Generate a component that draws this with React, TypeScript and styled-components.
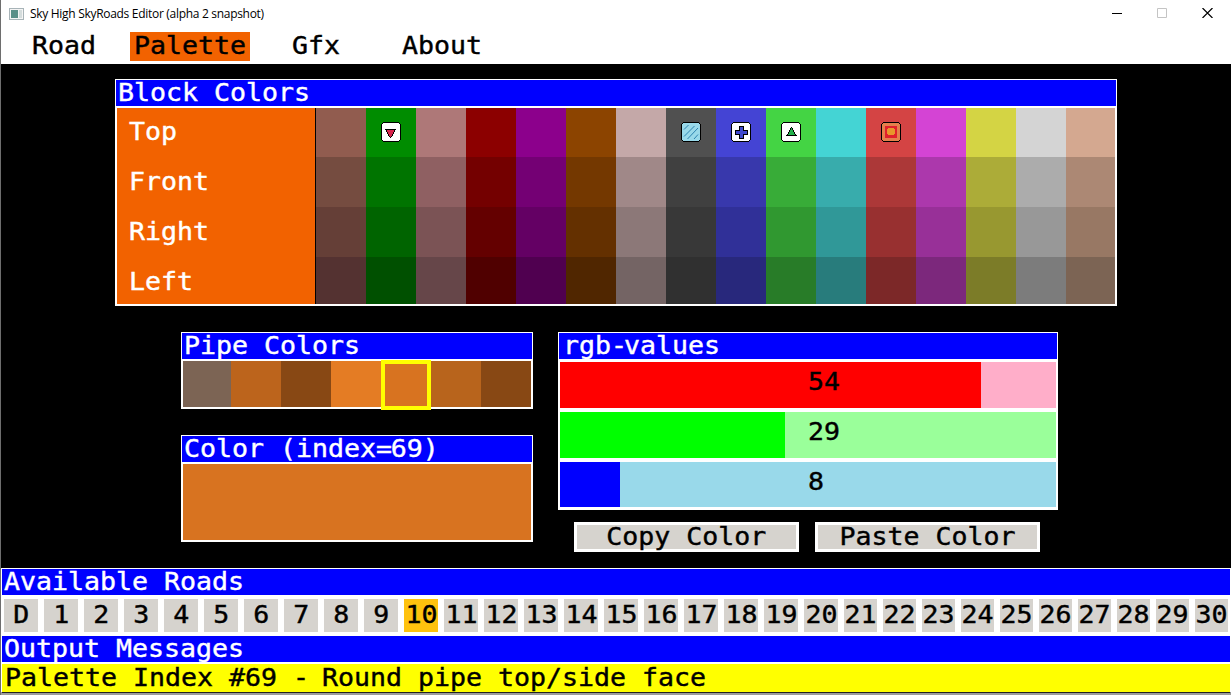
import React from "react";
import styled, { createGlobalStyle, css } from "styled-components";

const Global = createGlobalStyle`
  * { box-sizing: border-box; }
  body { margin: 0; background: #000; overflow: hidden; }
`;

const Window = styled.div`
  width: 1231px;
  height: 695px;
  display: flex;
  flex-direction: column;
  background: #000;
  border-left: 1px solid #6e6e6e;
  font-family: "DejaVu Sans Mono", monospace;
  font-size: 24px;
  line-height: 26px;
  color: #fff;
  overflow: hidden;
`;

const Label = styled.span<{ $center?: boolean }>`
  display: inline-block;
  white-space: pre;
  transform: scaleX(1.1073);
  transform-origin: ${(p) => (p.$center ? "center" : "left")};
  -webkit-text-stroke: 0.4px currentColor;
`;

const Tight = styled.span<{ $by?: number }>`
  letter-spacing: -${(p) => p.$by ?? 2.8}px;
`;

const TitleBar = styled.header`
  height: 28px;
  flex: none;
  display: flex;
  align-items: center;
  padding: 0 18px 0 8px;
  background: #fff;
  color: #000;
`;

const Title = styled.span`
  flex: 1;
  margin-left: 6px;
  font: 12px/26px "Open Sans", "Noto Sans", sans-serif;
  letter-spacing: -0.3px;
  white-space: nowrap;
`;

const Controls = styled.div`
  display: flex;
  gap: 35px;
  padding-bottom: 2px;
`;

const Menu = styled.nav`
  height: 36px;
  flex: none;
  display: flex;
  align-items: flex-start;
  padding: 4px 0 0 27px;
  background: #fff;
  color: #000;
`;

const MenuItem = styled.div<{ $w: number; $gap?: number; $active?: boolean }>`
  width: ${(p) => p.$w}px;
  height: 29px;
  margin-right: ${(p) => p.$gap ?? 0}px;
  padding-left: 4px;
  line-height: 29px;
  background: ${(p) => (p.$active ? "#f26200" : "transparent")};
`;

const Workspace = styled.main`
  height: 504px;
  flex: none;
  display: flex;
  flex-direction: column;
  padding: 15px 0 0 114px;
`;

const PanelTitle = styled.div<{ $indent?: number }>`
  height: 27px;
  flex: none;
  padding-left: ${(p) => p.$indent ?? 2}px;
  border: 1px solid #fff;
  border-bottom: 0;
  background: #00f;
  line-height: 26px;
`;

const PanelBody = styled.div`
  border: 2px solid #fff;
  display: flex;
  overflow: hidden;
`;

const BlockPanel = styled.section`
  width: 1002px;
`;

const BlockBody = styled(PanelBody)`
  height: 200px;
`;

const FaceNames = styled.div`
  width: 199px;
  flex: none;
  background: #f26200;
  border-right: 1px solid #000;
`;

const FaceName = styled.div`
  height: 50px;
  padding-left: 12px;
  line-height: 48px;
`;

const Column = styled.div`
  width: 50px;
  flex: none;
`;

const Cell = styled.div<{ $color: string; $first?: boolean }>`
  height: ${(p) => (p.$first ? 49 : 50)}px;
  display: flex;
  align-items: flex-start;
  justify-content: center;
  padding-top: 14px;
  background: ${(p) => p.$color};
`;

const LowerArea = styled.div`
  display: flex;
  gap: 25px;
  margin: 26px 0 0 66px;
`;

const LeftStack = styled.div`
  width: 352px;
  display: flex;
  flex-direction: column;
  gap: 26px;
`;

const Frame = styled.section`
  width: 100%;
`;

const PipeBody = styled(PanelBody)`
  height: 50px;
  overflow: visible;
`;

const PipeCell = styled.div<{ $color: string; $first?: boolean; $selected?: boolean }>`
  width: ${(p) => (p.$first ? 48 : 50)}px;
  height: 46px;
  flex: none;
  background: ${(p) => p.$color};
  ${(p) =>
    p.$selected &&
    css`
      height: 50px;
      margin-top: -1px;
      border: 4px solid #ff0;
      z-index: 1;
    `}
`;

const Swatch = styled(PanelBody)`
  height: 80px;
  background: #d87320;
`;

const RightStack = styled.div`
  width: 500px;
`;

const Sliders = styled.div`
  height: 151px;
  padding: 3px 2px;
  display: flex;
  flex-direction: column;
  gap: 4px;
  background: #fff;
`;

const Slider = styled.div<{ $track: string; $fill: string; $width: number }>`
  height: 46px;
  padding-left: 248px;
  line-height: 40px;
  color: #000;
  background: linear-gradient(
    to right,
    ${(p) => p.$fill} ${(p) => p.$width}px,
    ${(p) => p.$track} ${(p) => p.$width}px
  );
  &:last-child {
    height: 45px;
  }
`;

const Actions = styled.div`
  display: flex;
  gap: 16px;
  margin: 12px 0 0 16px;
`;

const Button = styled.button`
  width: 225px;
  height: 30px;
  padding: 0 1px 0 0;
  border: 3px solid #fff;
  background: #d6d3ce;
  color: #000;
  font: inherit;
  line-height: 24px;
  text-align: center;
`;

const RoadStrip = styled.div`
  height: 40px;
  flex: none;
  display: flex;
  gap: 6px;
  padding: 4px 0 3px 3px;
  background: #fff;
`;

const Road = styled.div<{ $active?: boolean; $narrow?: boolean }>`
  width: ${(p) => (p.$narrow ? 33 : 34)}px;
  height: 33px;
  flex: none;
  display: flex;
  justify-content: center;
  background: ${(p) => (p.$active ? "#ffc20e" : "#d6d3ce")};
  color: #000;
  line-height: 33px;
`;

const Message = styled.div`
  height: 31px;
  flex: none;
  padding-left: 3px;
  border: 1px solid #fff;
  border-top-width: 2px;
  border-bottom: 1px solid #222;
  background: #ff0;
  color: #000;
  line-height: 28px;
`;

const Footer = styled.div`
  flex: 1;
  background: #9c9c9c;
`;

const blockColors: string[][] = [
  ["#915c4f", "#754c40", "#653f37", "#543231"],
  ["#008c00", "#007400", "#006400", "#005000"],
  ["#ae7878", "#8f6062", "#7b5355", "#664649"],
  ["#8c0000", "#740000", "#640000", "#500000"],
  ["#8c008c", "#740074", "#640064", "#500050"],
  ["#8c4400", "#743800", "#643000", "#502600"],
  ["#c4a8a8", "#a08888", "#8c7878", "#746464"],
  ["#505050", "#404040", "#383838", "#303030"],
  ["#4444d4", "#3838ac", "#303098", "#28287c"],
  ["#44d444", "#38ac38", "#309830", "#287c28"],
  ["#44d4d4", "#38acac", "#309898", "#287c7c"],
  ["#d44444", "#ac3838", "#983030", "#7c2828"],
  ["#d444d4", "#ac38ac", "#983098", "#7c287c"],
  ["#d4d444", "#acac38", "#989830", "#7c7c28"],
  ["#d4d4d4", "#acacac", "#989898", "#7c7c7c"],
  ["#d4a890", "#ac8874", "#987864", "#7c6454"],
];

const pipeColors = ["#7c6454", "#bc641c", "#884814", "#e47c24", "#d87320", "#b8641c", "#884814"];

const Tile = ({ fill, children }: { fill: string; children: React.ReactNode }) => (
  <svg width="20" height="20" viewBox="0 0 20 20" shapeRendering="crispEdges">
    <path d="M2 0h16v1h1v1h1v16h-1v1h-1v1H2v-1H1v-1H0V2h1V1h1z" fill="#000" />
    <path d="M2 1h16v1h1v16h-1v1H2v-1H1V2h1z" fill={fill} />
    {children}
  </svg>
);

const markers: Record<number, React.ReactNode> = {
  1: (
    <Tile fill="#fff">
      <path d="M4 7h11v1h-1v2h-1v2h-1v2h-1v1h-1v1H9v-1H8v-1H7v-2H6v-2H5V8H4z" fill="#000" />
      <path d="M6 8h7v2h-1v2h-1v2h-1v1H9v-1H8v-2H7v-2H6z" fill="#d8244c" />
    </Tile>
  ),
  7: (
    <Tile fill="#99d9ea">
      <path
        d="M3 7.5L7.5 3M3 14.5L13.5 4M6.5 17L17 6M13 17l4-4.5"
        stroke="#2078a8"
        strokeWidth="0.9"
        fill="none"
        shapeRendering="geometricPrecision"
      />
    </Tile>
  ),
  8: (
    <Tile fill="#fff">
      <path d="M8 4h5v4h4v5h-4v4H8v-4H4V8h4z" fill="#000" />
      <path d="M9 5h3v4h4v3h-4v4H9v-4H5V9h4z" fill="#3f48cc" />
    </Tile>
  ),
  9: (
    <Tile fill="#fff">
      <path d="M10 5h1v1h1v2h1v2h1v2h1v1h1v1H5v-1h1v-1h1v-2h1V8h1V6h1z" fill="#000" />
      <path d="M10 6h1v2h1v2h1v2h1v1H7v-1h1v-2h1V8h1z" fill="#22b14c" />
    </Tile>
  ),
  11: (
    <Tile fill="#e4804c">
      <path d="M4 4h12v12H4z" fill="#e0202c" />
      <path d="M7 6h6v1h1v5h-1v1H7v-1H6V7h1z" fill="#e8962c" />
    </Tile>
  ),
};

const roads = ["D", ...Array.from({ length: 30 }, (_, i) => String(i + 1))];

const sliders = [
  { value: 54, fill: "#f00", track: "#ffaec9", width: 421 },
  { value: 29, fill: "#0f0", track: "#9aff9a", width: 225 },
  { value: 8, fill: "#00f", track: "#99d9ea", width: 60 },
];

export default function App() {
  return (
    <>
      <Global />
      <Window>
        <TitleBar>
          <svg width="15" height="12" viewBox="0 0 15 12" shapeRendering="crispEdges">
            <path d="M.5.5h14v11H.5z" fill="#f4f4f4" stroke="#a8b4b8" />
            <path d="M2 2h7v8H2z" fill="#5a8f88" />
            <path d="M10 2h3v8h-3z" fill="#d4dcdc" />
          </svg>
          <Title>Sky High SkyRoads Editor (alpha 2 snapshot)</Title>
          <Controls>
            <svg width="10" height="10" viewBox="0 0 10 10"><path d="M0 5.5h10" stroke="#000" /></svg>
            <svg width="10" height="10" viewBox="0 0 10 10"><path d="M.5.5h9v9h-9z" stroke="#c4c4c4" fill="none" /></svg>
            <svg width="11" height="10" viewBox="0 0 11 10"><path d="M.5 0l10 10M10.5 0l-10 10" stroke="#000" strokeWidth="1.2" /></svg>
          </Controls>
        </TitleBar>
        <Menu>
          <MenuItem $w={72} $gap={30}><Label>Road</Label></MenuItem>
          <MenuItem $w={120} $gap={38} $active><Label>Palette</Label></MenuItem>
          <MenuItem $w={72} $gap={38}><Label>Gfx</Label></MenuItem>
          <MenuItem $w={92}><Label>About</Label></MenuItem>
        </Menu>
        <Workspace>
          <BlockPanel>
            <PanelTitle><Label>Block Colors</Label></PanelTitle>
            <BlockBody>
              <FaceNames>
                {["Top", "Front", "Right", "Left"].map((n) => (
                  <FaceName key={n}><Label>{n}</Label></FaceName>
                ))}
              </FaceNames>
              {blockColors.map((col, i) => (
                <Column key={i}>
                  {col.map((c, j) => (
                    <Cell key={j} $color={c} $first={j === 0}>{j === 0 && markers[i]}</Cell>
                  ))}
                </Column>
              ))}
            </BlockBody>
          </BlockPanel>
          <LowerArea>
            <LeftStack>
              <Frame>
                <PanelTitle><Label>Pipe Colors</Label></PanelTitle>
                <PipeBody>
                  {pipeColors.map((c, i) => (
                    <PipeCell key={i} $color={c} $first={i === 0} $selected={i === 4} />
                  ))}
                </PipeBody>
              </Frame>
              <Frame>
                <PanelTitle>
                  <Label>Color (index<Tight $by={1.2}>=</Tight>69<Tight $by={0}>)</Tight></Label>
                </PanelTitle>
                <Swatch />
              </Frame>
            </LeftStack>
            <RightStack>
              <PanelTitle $indent={4}><Label>rgb<Tight>-</Tight>values</Label></PanelTitle>
              <Sliders>
                {sliders.map((s) => (
                  <Slider key={s.value} $fill={s.fill} $track={s.track} $width={s.width}>
                    <Label>{s.value}</Label>
                  </Slider>
                ))}
              </Sliders>
              <Actions>
                <Button><Label $center>Copy Color</Label></Button>
                <Button><Label $center>Paste Color</Label></Button>
              </Actions>
            </RightStack>
          </LowerArea>
        </Workspace>
        <PanelTitle><Label>Available Roads</Label></PanelTitle>
        <RoadStrip>
          {roads.map((r, i) => (
            <Road key={r} $active={r === "10"} $narrow={i > 20}><Label $center>{r}</Label></Road>
          ))}
        </RoadStrip>
        <PanelTitle><Label>Output Messages</Label></PanelTitle>
        <Message>
          <Label>Palette Index #69 <Tight>-</Tight> Round pipe top/side face</Label>
        </Message>
        <Footer />
      </Window>
    </>
  );
}
